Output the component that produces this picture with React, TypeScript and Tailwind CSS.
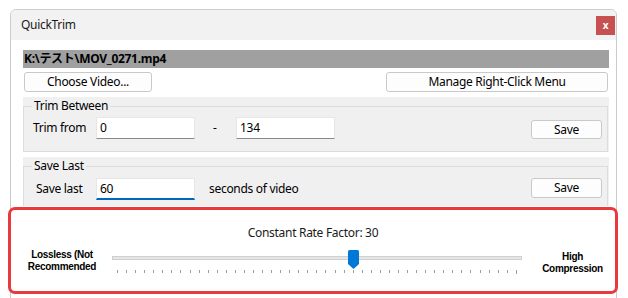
const ui = { fontFamily: '"Noto Sans", "Noto Sans CJK JP", sans-serif' };
const bold = { fontFamily: '"Liberation Sans", Arial, sans-serif' };

const TICKS = Array.from({ length: 45 }, (_, i) => i);

function Btn({ label, className }: { label: string; className: string }) {
  return (
    <div
      className={`flex items-center justify-center rounded-[3px] border border-[#c9c9c9] bg-[#fdfdfd] text-[12px] tracking-[-0.3px] text-black ${className}`}
    >
      {label}
    </div>
  );
}

function Field({ value, focused }: { value: string; focused?: boolean }) {
  return (
    <div
      className={`flex h-[22px] w-[99px] items-center bg-white pl-[3px] text-[12px] text-black border border-[#e6e6e6] ${
        focused ? "border-b-2 border-b-[#0067c0]" : "border-b-[#8a8a8a]"
      }`}
    >
      {value}
    </div>
  );
}

export default function App() {
  return (
    <div className="h-[298px] w-[628px] overflow-hidden bg-white pl-[10px] pt-[9px] tracking-[-0.3px]" style={ui}>
      <div className="flex h-[300px] w-[607px] flex-col rounded-t-[6px] border border-[#cccccc] bg-white">
        {/* title bar */}
        <div className="flex h-[30px] items-center justify-between rounded-t-[6px] bg-[#f2f2f2] pl-[10px] pr-px">
          <span className="text-[12px] text-[#1a1a1a]">QuickTrim</span>
          <div className="flex h-[19px] w-[19px] items-center justify-center bg-[#c75050] text-[10px] font-bold leading-none text-white">
            x
          </div>
        </div>

        <div className="flex flex-col pl-[12px] pr-[7px] pt-[10px]">
          <div className="flex h-[18px] items-center bg-[#a0a0a0] pl-px text-[12px] font-bold text-black">
            K:\テスト\MOV_0271.mp4
          </div>

          <div className="mt-[4px] flex justify-between pl-px pr-px">
            <Btn label="Choose Video..." className="h-[20px] w-[128px]" />
            <Btn label="Manage Right-Click Menu" className="h-[20px] w-[222px]" />
          </div>

          {/* Trim Between */}
          <div className="mt-[5px] h-[55px] bg-[#f0f0f0] pr-px pt-px">
            <fieldset className="h-[54px] border border-[#dcdcdc]">
              <legend className="ml-[8px] px-[2px] text-[12px] leading-[16px] text-black">Trim Between</legend>
              <div className="mt-[3px] flex items-start pl-[9px] pr-[5px]">
                <span className="w-[63px] pt-[2px] text-[12px] text-black">Trim from</span>
                <Field value="0" />
                <span className="ml-[18px] w-[4px] pt-[2px] text-[12px] text-black">-</span>
                <div className="ml-[19px]">
                  <Field value="134" />
                </div>
                <Btn label="Save" className="ml-auto mt-[3px] h-[19px] w-[71px]" />
              </div>
            </fieldset>
          </div>

          {/* Save Last */}
          <div className="mt-[5px] h-[49px] overflow-hidden bg-[#f0f0f0] pr-px pt-px">
            <fieldset className="h-[60px] border border-[#dcdcdc]">
              <legend className="ml-[8px] px-[2px] text-[12px] leading-[16px] text-black">Save Last</legend>
              <div className="mt-[4px] flex items-start pl-[12px] pr-[5px]">
                <span className="w-[60px] pt-[2px] text-[12px] text-black">Save last</span>
                <Field value="60" focused />
                <span className="ml-[14px] pt-[2px] text-[12px] text-black">seconds of video</span>
                <Btn label="Save" className="ml-auto h-[20px] w-[71px]" />
              </div>
            </fieldset>
          </div>

          {/* CRF slider, highlighted */}
          <div className="-ml-[15px] -mr-[9px] mt-px h-[87px] rounded-[7px] border-[3px] border-[#e8393d] bg-white">
            <div className="pt-[15px] text-center text-[12px] leading-[16px] text-[#1a1a1a]">
              Constant Rate Factor: 30
            </div>
            <div className="mt-[7px] flex items-start">
              <div
                className="ml-[1px] mt-px flex w-[100px] flex-col items-center text-[10px] font-bold leading-[12px] text-black"
                style={bold}
              >
                <span>Lossless (Not</span>
                <span>Recommended</span>
              </div>
              <div className="relative mt-[8px] w-[410px]">
                <div className="h-[4px] border border-[#d0d0d0] bg-[#e6e6e6]" />
                <div className="ml-[5px] mt-[10px] flex w-[400px] items-start justify-between">
                  {TICKS.map((t) => (
                    <div key={t} className={`w-px bg-[#9c9c9c] ${t === 44 ? "h-[4px]" : "h-[3px]"}`} />
                  ))}
                </div>
                <svg className="absolute left-[236px] top-[-6px]" width="11" height="19" viewBox="0 0 11 19">
                  <path d="M1.5 0H9.5Q11 0 11 1.5V14L5.5 19L0 14V1.5Q0 0 1.5 0Z" fill="#0078d7" />
                </svg>
              </div>
              <div
                className="mt-[3px] flex flex-1 flex-col items-center pl-[8px] text-[10px] font-bold leading-[12px] text-black"
                style={bold}
              >
                <span>High</span>
                <span>Compression</span>
              </div>
            </div>
          </div>
        </div>
      </div>
    </div>
  );
}
